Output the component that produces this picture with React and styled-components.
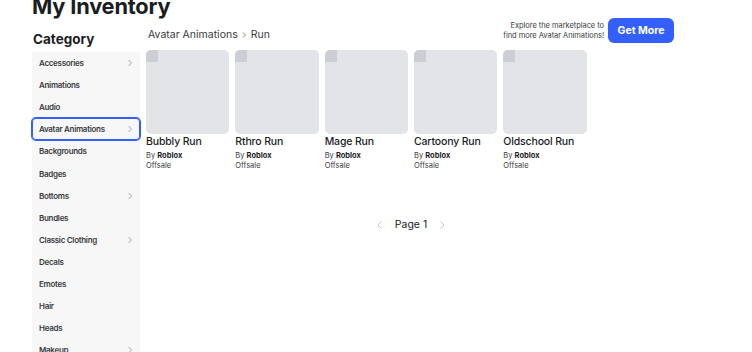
import React from 'react';
import styled, { createGlobalStyle } from 'styled-components';

const GlobalStyle = createGlobalStyle`
  html, body {
    margin: 0;
    padding: 0;
    background: #ffffff;
    font-family: Inter, "Noto Sans", "Liberation Sans", sans-serif;
    color: #1b1d1f;
    overflow: hidden;
  }
`;

const Page = styled.div`
  width: 752px;
  height: 352px;
  padding-left: 32px;
  box-sizing: border-box;
  overflow: hidden;
`;

const PageHeader = styled.div`
  display: flow-root;
  height: 18px;
`;

const PageTitle = styled.h1`
  margin: -8px 0 0 0;
  font-size: 21.8px;
  line-height: 28px;
  font-weight: 700;
  color: #1b1d1f;
  letter-spacing: -0.2px;
`;

const Body = styled.div`
  display: flex;
  gap: 6px;
  align-items: flex-start;
`;

const Aside = styled.div`
  width: 108px;
  flex-shrink: 0;
`;

const CategoryTitle = styled.h2`
  margin: 10px 0 2px 1px;
  font-size: 13.5px;
  line-height: 22px;
  font-weight: 700;
  color: #1b1d1f;
`;

const SideMenu = styled.ul`
  list-style: none;
  margin: 0;
  padding: 0;
  background: #f7f7f8;
  height: 320px;
`;

const MenuItem = styled.li`
  height: 22.1px;
  display: flex;
  align-items: center;
  justify-content: space-between;
  padding: 0 6px 0 7px;
  font-size: 8px;
  letter-spacing: -0.3px;
  font-weight: 600;
  color: #393b3d;
  border-radius: 4px;
  box-shadow: ${({ $active }) =>
    $active ? '0 0 0 1px #335fff, inset 0 0 0 1px #335fff' : 'none'};
`;

const Chevron = styled.svg`
  width: 8px;
  height: 8px;
  color: #9a9ca0;
`;

const Main = styled.div`
  width: 530px;
  flex-shrink: 0;
`;

const TopBar = styled.div`
  height: 25px;
  display: flex;
  align-items: flex-end;
  justify-content: space-between;
`;

const Breadcrumb = styled.div`
  display: flex;
  align-items: center;
  gap: 3px;
  margin-left: 2px;
  margin-bottom: 1px;
  font-size: 10.5px;
  line-height: 14px;
  color: #393b3d;
`;

const Cta = styled.div`
  display: flex;
  align-items: center;
  gap: 4px;
  margin-right: 2px;
`;

const CtaText = styled.div`
  font-size: 7.5px;
  letter-spacing: -0.05px;
  line-height: 10px;
  text-align: right;
  color: #393b3d;
`;

const GetMore = styled.button`
  height: 25px;
  padding: 0 9.5px;
  border: none;
  border-radius: 6px;
  background: #335fff;
  color: #ffffff;
  font-family: inherit;
  font-size: 10.5px;
  font-weight: 700;
`;

const ItemGrid = styled.div`
  margin-top: 7px;
  display: grid;
  grid-template-columns: repeat(6, 1fr);
  gap: 6px;
`;

const ItemCard = styled.div`
  display: flex;
  flex-direction: column;
`;

const Thumb = styled.div`
  height: 84px;
  border-radius: 5px;
  background: #e3e4e8;
  position: relative;
  overflow: hidden;
`;

const ThumbBadge = styled.div`
  position: absolute;
  left: 0;
  top: 0;
  width: 12px;
  height: 12px;
  background: #cdced5;
`;

const ItemName = styled.div`
  margin-top: 0;
  font-size: 10.5px;
  letter-spacing: -0.15px;
  line-height: 15px;
  font-weight: 500;
  color: #1b1d1f;
  white-space: nowrap;
`;

const ItemMeta = styled.div`
  font-size: 7.5px;
  line-height: 10px;
  color: #393b3d;
  margin-top: ${({ $first }) => ($first ? '2px' : '0')};

  b {
    font-weight: 700;
    color: #1b1d1f;
  }
`;

const Pager = styled.div`
  margin-top: 47px;
  display: flex;
  justify-content: center;
  align-items: center;
  gap: 10px;
  font-size: 10.5px;
  color: #1b1d1f;
`;

const PagerArrow = styled.svg`
  width: 10px;
  height: 10px;
  color: #c3c5c9;
`;

const ChevronRight = () => (
  <Chevron viewBox="0 0 8 8" fill="none">
    <path d="M2.5 1 L5.5 4 L2.5 7" stroke="currentColor" strokeWidth="0.9" />
  </Chevron>
);

const categories = [
  { name: 'Accessories', sub: true },
  { name: 'Animations' },
  { name: 'Audio' },
  { name: 'Avatar Animations', sub: true, active: true },
  { name: 'Backgrounds' },
  { name: 'Badges' },
  { name: 'Bottoms', sub: true },
  { name: 'Bundles' },
  { name: 'Classic Clothing', sub: true },
  { name: 'Decals' },
  { name: 'Emotes' },
  { name: 'Hair' },
  { name: 'Heads' },
  { name: 'Makeup', sub: true },
];

const items = ['Bubbly Run', 'Rthro Run', 'Mage Run', 'Cartoony Run', 'Oldschool Run'];

const App = () => (
  <>
    <GlobalStyle />
    <Page>
      <PageHeader>
        <PageTitle>My Inventory</PageTitle>
      </PageHeader>
      <Body>
        <Aside>
          <CategoryTitle>Category</CategoryTitle>
          <SideMenu>
            {categories.map((c) => (
              <MenuItem key={c.name} $active={c.active}>
                {c.name}
                {c.sub && <ChevronRight />}
              </MenuItem>
            ))}
          </SideMenu>
        </Aside>
        <Main>
          <TopBar>
            <Breadcrumb>
              Avatar Animations
              <svg width="7" height="8" viewBox="0 0 7 8" fill="none">
                <path d="M2 1.5 L4.5 4 L2 6.5" stroke="#7a7c80" strokeWidth="0.9" />
              </svg>
              Run
            </Breadcrumb>
            <Cta>
              <CtaText>
                Explore the marketplace to
                <br />
                find more Avatar Animations!
              </CtaText>
              <GetMore>Get More</GetMore>
            </Cta>
          </TopBar>
          <ItemGrid>
            {items.map((name) => (
              <ItemCard key={name}>
                <Thumb>
                  <ThumbBadge />
                </Thumb>
                <ItemName>{name}</ItemName>
                <ItemMeta $first>
                  By <b>Roblox</b>
                </ItemMeta>
                <ItemMeta>Offsale</ItemMeta>
              </ItemCard>
            ))}
          </ItemGrid>
          <Pager>
            <PagerArrow viewBox="0 0 10 10" fill="none">
              <path d="M6.5 1.5 L3 5 L6.5 8.5" stroke="currentColor" strokeWidth="1" />
            </PagerArrow>
            <span>Page 1</span>
            <PagerArrow viewBox="0 0 10 10" fill="none">
              <path d="M3.5 1.5 L7 5 L3.5 8.5" stroke="currentColor" strokeWidth="1" />
            </PagerArrow>
          </Pager>
        </Main>
      </Body>
    </Page>
  </>
);

export default App;
